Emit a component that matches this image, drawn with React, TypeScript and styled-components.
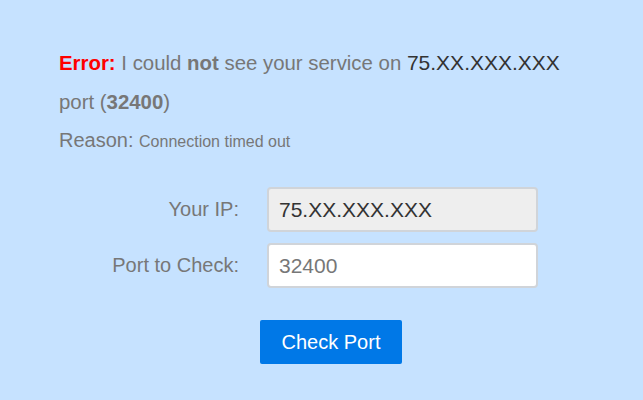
import styled, { createGlobalStyle } from "styled-components";

const GlobalStyle = createGlobalStyle`
  html, body {
    margin: 0;
    padding: 0;
    background-color: #c6e2ff;
  }
  body {
    font-family: "Liberation Sans", Arial, sans-serif;
  }
`;

export default function App() {
  return (
    <Page>
      <GlobalStyle />
      <Message>
        <ErrorLabel>Error:</ErrorLabel> I could <Strong>not</Strong> see your
        service on <Ip>75.XX.XXX.XXX</Ip> port (<Strong>32400</Strong>)
      </Message>
      <Reason>
        Reason: <Small>Connection timed out</Small>
      </Reason>
      <Form>
        <Label>Your IP:</Label>
        <Input readOnly value="75.XX.XXX.XXX" $disabled />
        <Label>Port to Check:</Label>
        <Input defaultValue="32400" />
        <ButtonRow>
          <Button>Check Port</Button>
        </ButtonRow>
      </Form>
    </Page>
  );
}

const Page = styled.div`
  min-height: 400px;
  box-sizing: border-box;
  padding: 43px 59px 0;
  background-color: #c6e2ff;
  color: #777;
`;

const Message = styled.p`
  margin: 0;
  width: 520px;
  font-size: 20.4px;
  line-height: 39px;
`;

const ErrorLabel = styled.strong`
  color: #ff0000;
`;

const Strong = styled.strong`
  font-weight: bold;
`;

const Ip = styled.span`
  color: #333;
  font-size: 21px;
`;

const Reason = styled.p`
  margin: 0;
  font-size: 20px;
  line-height: 36px;
`;

const Small = styled.span`
  font-size: 16px;
`;

const Form = styled.div`
  display: grid;
  grid-template-columns: 180px 271px;
  column-gap: 28px;
  row-gap: 11px;
  align-items: center;
  margin-top: 27px;
`;

const Label = styled.label`
  text-align: right;
  font-size: 20px;
  color: #777;
`;

const Input = styled.input<{ $disabled?: boolean }>`
  box-sizing: border-box;
  height: 45px;
  width: 100%;
  padding: 0 10px;
  border: 2px solid #d0d4d9;
  border-radius: 4px;
  font-family: inherit;
  font-size: 21px;
  outline: none;
  color: ${(props) => (props.$disabled ? "#333" : "#777")};
  background-color: ${(props) => (props.$disabled ? "#eeeeee" : "#ffffff")};
`;

const ButtonRow = styled.div`
  grid-column: 1 / span 2;
  padding-left: 201px;
  margin-top: 21px;
`;

const Button = styled.button`
  width: 142px;
  height: 44px;
  border: none;
  border-radius: 2px;
  background-color: #0078e7;
  color: #fff;
  font-family: inherit;
  font-size: 20px;
  cursor: pointer;
`;
